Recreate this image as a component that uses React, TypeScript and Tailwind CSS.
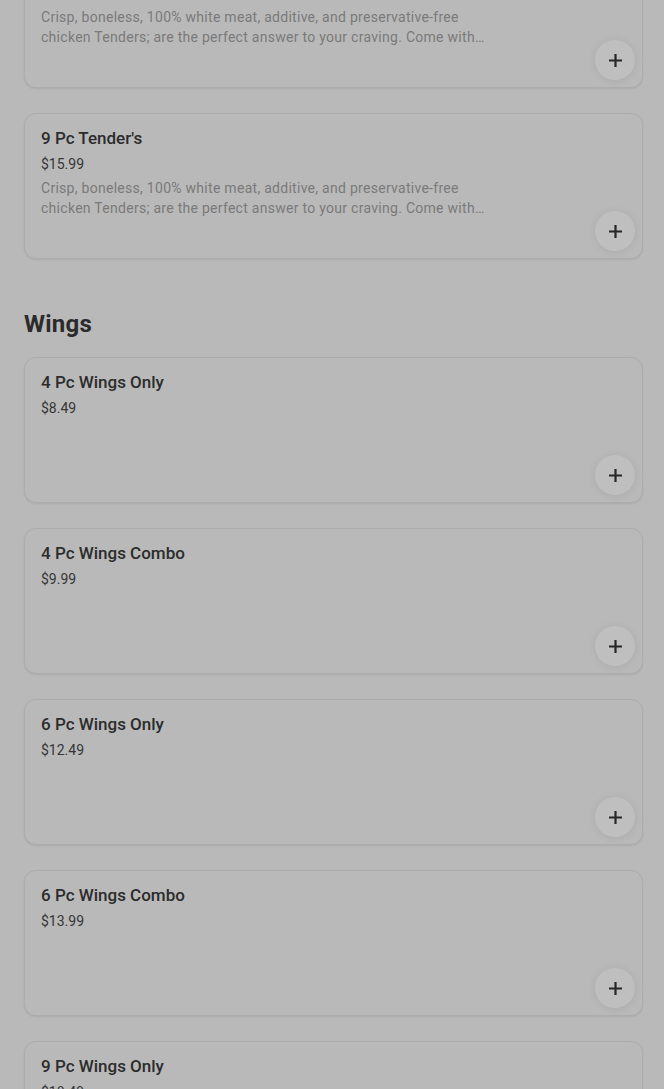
import React from 'react';

type Item = {
  name: string;
  price: string;
  description?: string;
};

const tenderDesc =
  'Crisp, boneless, 100% white meat, additive, and preservative-free chicken Tenders; are the perfect answer to your craving. Come with a choice of one side and a drink.';

const tenders: Item[] = [
  { name: "6 Pc Tender's", price: '$11.99', description: tenderDesc },
  { name: "9 Pc Tender's", price: '$15.99', description: tenderDesc },
];

const wings: Item[] = [
  { name: '4 Pc Wings Only', price: '$8.49' },
  { name: '4 Pc Wings Combo', price: '$9.99' },
  { name: '6 Pc Wings Only', price: '$12.49' },
  { name: '6 Pc Wings Combo', price: '$13.99' },
  { name: '9 Pc Wings Only', price: '$18.49' },
];

function PlusIcon() {
  return (
    <svg width="13" height="13" viewBox="0 0 13 13" fill="none">
      <path d="M6.5 1v11M1 6.5h11" stroke="#262626" strokeWidth="2.2" strokeLinecap="square" />
    </svg>
  );
}

function ItemCard({ item }: { item: Item }) {
  return (
    <div className="relative h-[146px] rounded-xl border border-[#acacac] bg-[#b9b9b9] px-4 pt-3 shadow-[0_1px_2px_rgba(0,0,0,0.08)]">
      <h3 className="text-[17px] leading-6 font-medium text-[#2c2c2c]">{item.name}</h3>
      <p className="mt-1 text-sm leading-5 text-[#363636]">{item.price}</p>
      {item.description && (
        <p className="mt-1 w-[446px] text-sm leading-5 tracking-[0.02em] text-[#7a7a7a] line-clamp-2">
          {item.description}
        </p>
      )}
      <button className="absolute right-[7px] bottom-[7px] flex size-10 items-center justify-center rounded-full bg-[#bfbfbf] shadow-[0_1px_8px_rgba(0,0,0,0.08)]">
        <PlusIcon />
      </button>
    </div>
  );
}

export default function App() {
  return (
    <div
      className="min-h-screen overflow-hidden bg-[#b9b9b9]"
      style={{ fontFamily: 'Roboto, "Noto Sans", sans-serif' }}
    >
      <main className="pl-6 pr-[21px] mt-[-58px]">
        {/* Tenders */}
        <div className="space-y-[25px]">
          {tenders.map(item => (
            <ItemCard key={item.name} item={item} />
          ))}
        </div>

        {/* Wings */}
        <section className="mt-[49px]">
          <h2 className="mb-[17px] text-2xl font-bold tracking-[0.01em] text-[#2b2b2b]">Wings</h2>
          <div className="space-y-[25px]">
            {wings.map(item => (
              <ItemCard key={item.name} item={item} />
            ))}
          </div>
        </section>
      </main>
    </div>
  );
}
